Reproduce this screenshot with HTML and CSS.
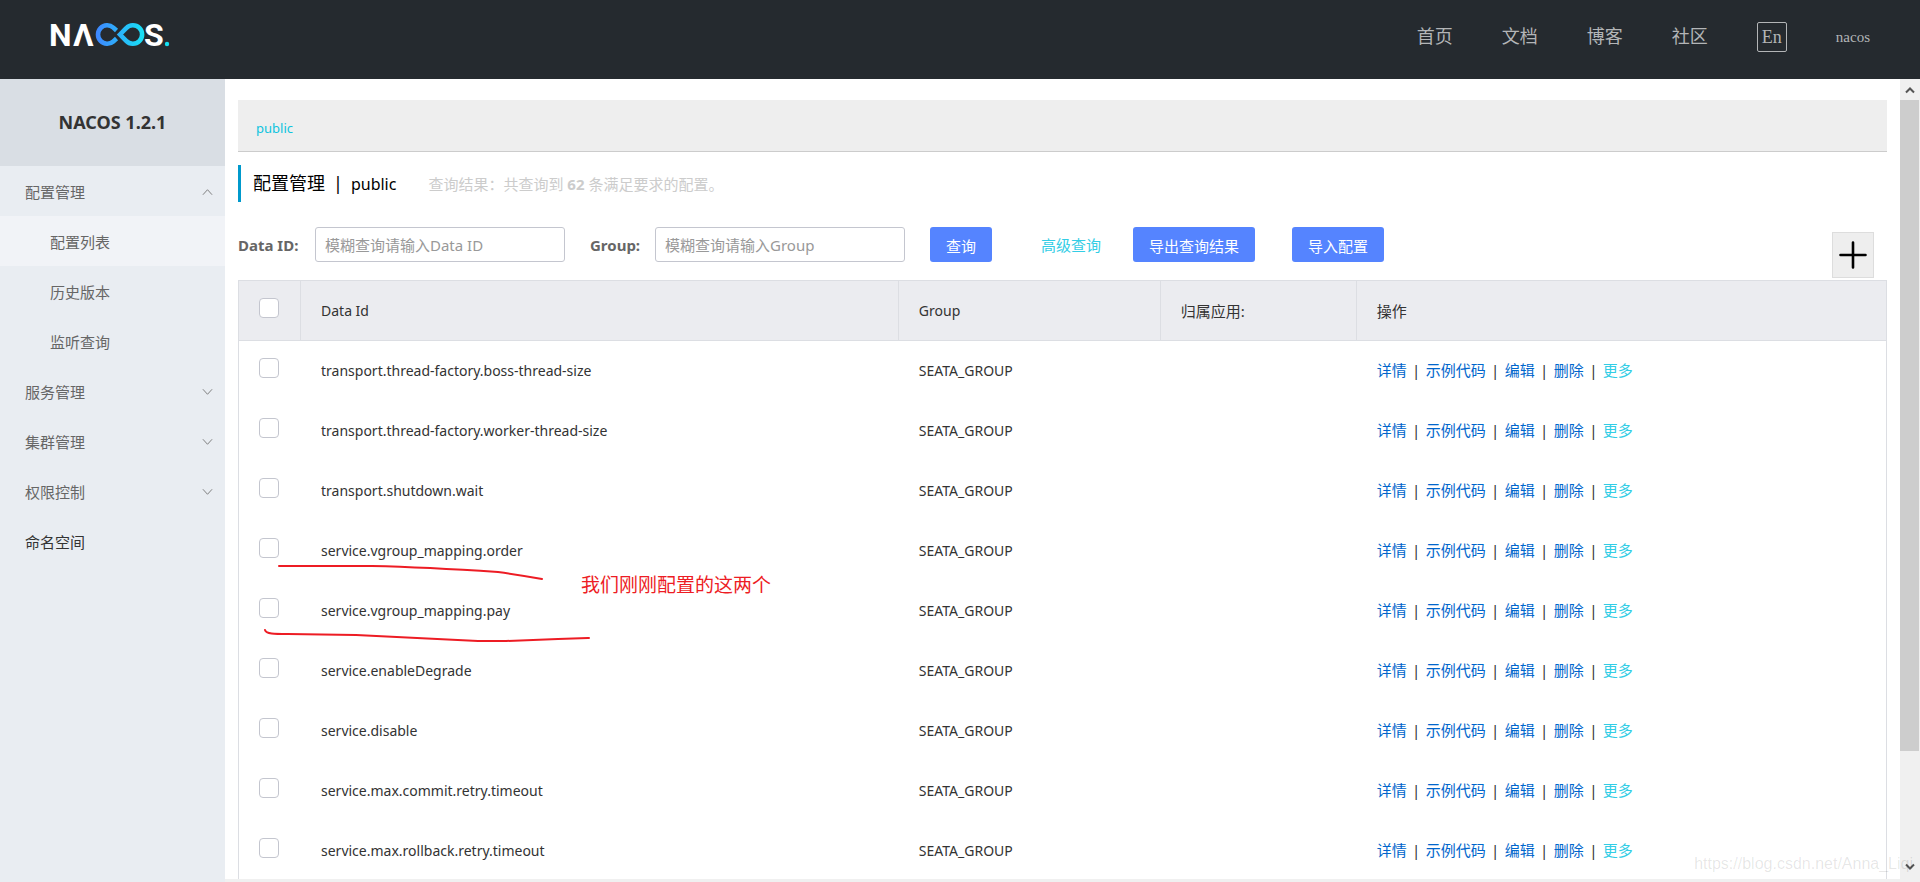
FILE: index.html
```html
<!DOCTYPE html>
<html lang="zh-CN">
<head>
<meta charset="utf-8">
<title>Nacos</title>
<link rel="stylesheet" href="styles.css">
</head>
<body>
<header class="topbar">
  <a class="logo" href="#" aria-label="Nacos">
    <svg width="120" height="28" viewBox="0 0 120 28">
      <defs>
        <linearGradient id="loop" gradientUnits="userSpaceOnUse" x1="45" y1="0" x2="94" y2="0">
          <stop offset="0" stop-color="#3f86ff"/>
          <stop offset="1" stop-color="#16e3f5"/>
        </linearGradient>
      </defs>
      <text class="logo-letter" x="-2" y="25">N</text>
      <text class="logo-letter" x="22" y="25">Λ</text>
      <g fill="none" stroke="url(#loop)" stroke-width="4.6">
        <path d="M65.5 9.5L62.3 6.6A9.2 9.2 0 1 0 62.3 20.4L65.5 17.5"/>
        <path d="M69 13.5L75.2 7.2A9.2 9.2 0 1 1 75.2 19.8Z"/>
      </g>
      <text class="logo-letter" x="93" y="25">S</text>
      <circle cx="116" cy="23" r="2.2" fill="#16dff0"/>
    </svg>
  </a>
  <nav class="topnav">
    <a href="#">首页</a>
    <a href="#">文档</a>
    <a href="#">博客</a>
    <a href="#">社区</a>
    <button class="lang" type="button">En</button>
    <a class="user" href="#">nacos</a>
  </nav>
</header>
<div class="layout">
  <aside class="sidebar">
    <h1 class="product">NACOS 1.2.1</h1>
    <nav class="menu">
      <a class="item" href="#">配置管理<svg class="chev" viewBox="0 0 12 8"><path d="M1 7L6 1.5L11 7"/></svg></a>
      <a class="item sub active" href="#">配置列表</a>
      <a class="item sub" href="#">历史版本</a>
      <a class="item sub" href="#">监听查询</a>
      <a class="item" href="#">服务管理<svg class="chev" viewBox="0 0 12 8"><path d="M1 1L6 6.5L11 1"/></svg></a>
      <a class="item" href="#">集群管理<svg class="chev" viewBox="0 0 12 8"><path d="M1 1L6 6.5L11 1"/></svg></a>
      <a class="item" href="#">权限控制<svg class="chev" viewBox="0 0 12 8"><path d="M1 1L6 6.5L11 1"/></svg></a>
      <a class="item strong" href="#">命名空间</a>
    </nav>
  </aside>
  <main class="main">
    <div class="content">
      <div class="namespaces"><a href="#">public</a></div>
      <div class="heading">
        <h2>配置管理<span class="bar">|</span><span class="space">public</span></h2>
        <p>查询结果：共查询到 <strong>62</strong> 条满足要求的配置。</p>
      </div>
      <form class="filters">
        <label for="data-id" class="label-id">Data ID:</label>
        <input id="data-id" type="text" placeholder="模糊查询请输入Data ID">
        <label for="group" class="label-group">Group:</label>
        <input id="group" type="text" placeholder="模糊查询请输入Group">
        <button class="btn search" type="button">查询</button>
        <a class="advanced" href="#">高级查询</a>
        <button class="btn export" type="button">导出查询结果</button>
        <button class="btn import" type="button">导入配置</button>
        <button class="add" type="button" aria-label="新建配置">
          <svg width="28" height="28" viewBox="0 0 28 28"><path d="M1.500 14H26.500M14 1.500V26.500" stroke="#000" stroke-width="2.600" stroke-linecap="round"/></svg>
        </button>
      </form>
      <div class="table-area">
        <table>
          <colgroup><col class="c-check"><col class="c-id"><col class="c-group"><col class="c-app"><col></colgroup>
          <thead>
            <tr><th><input type="checkbox" aria-label="全选"></th><th>Data Id</th><th>Group</th><th>归属应用:</th><th>操作</th></tr>
          </thead>
          <tbody>
            <tr><td><input type="checkbox" aria-label="选择"></td><td>transport.thread-factory.boss-thread-size</td><td>SEATA_GROUP</td><td></td><td><div class="ops"><a href="#">详情</a><i>|</i><a href="#">示例代码</a><i>|</i><a href="#">编辑</a><i>|</i><a href="#">删除</a><i>|</i><a class="more" href="#">更多</a></div></td></tr>
            <tr><td><input type="checkbox" aria-label="选择"></td><td>transport.thread-factory.worker-thread-size</td><td>SEATA_GROUP</td><td></td><td><div class="ops"><a href="#">详情</a><i>|</i><a href="#">示例代码</a><i>|</i><a href="#">编辑</a><i>|</i><a href="#">删除</a><i>|</i><a class="more" href="#">更多</a></div></td></tr>
            <tr><td><input type="checkbox" aria-label="选择"></td><td>transport.shutdown.wait</td><td>SEATA_GROUP</td><td></td><td><div class="ops"><a href="#">详情</a><i>|</i><a href="#">示例代码</a><i>|</i><a href="#">编辑</a><i>|</i><a href="#">删除</a><i>|</i><a class="more" href="#">更多</a></div></td></tr>
            <tr><td><input type="checkbox" aria-label="选择"></td><td>service.vgroup_mapping.order</td><td>SEATA_GROUP</td><td></td><td><div class="ops"><a href="#">详情</a><i>|</i><a href="#">示例代码</a><i>|</i><a href="#">编辑</a><i>|</i><a href="#">删除</a><i>|</i><a class="more" href="#">更多</a></div></td></tr>
            <tr><td><input type="checkbox" aria-label="选择"></td><td>service.vgroup_mapping.pay</td><td>SEATA_GROUP</td><td></td><td><div class="ops"><a href="#">详情</a><i>|</i><a href="#">示例代码</a><i>|</i><a href="#">编辑</a><i>|</i><a href="#">删除</a><i>|</i><a class="more" href="#">更多</a></div></td></tr>
            <tr><td><input type="checkbox" aria-label="选择"></td><td>service.enableDegrade</td><td>SEATA_GROUP</td><td></td><td><div class="ops"><a href="#">详情</a><i>|</i><a href="#">示例代码</a><i>|</i><a href="#">编辑</a><i>|</i><a href="#">删除</a><i>|</i><a class="more" href="#">更多</a></div></td></tr>
            <tr><td><input type="checkbox" aria-label="选择"></td><td>service.disable</td><td>SEATA_GROUP</td><td></td><td><div class="ops"><a href="#">详情</a><i>|</i><a href="#">示例代码</a><i>|</i><a href="#">编辑</a><i>|</i><a href="#">删除</a><i>|</i><a class="more" href="#">更多</a></div></td></tr>
            <tr><td><input type="checkbox" aria-label="选择"></td><td>service.max.commit.retry.timeout</td><td>SEATA_GROUP</td><td></td><td><div class="ops"><a href="#">详情</a><i>|</i><a href="#">示例代码</a><i>|</i><a href="#">编辑</a><i>|</i><a href="#">删除</a><i>|</i><a class="more" href="#">更多</a></div></td></tr>
            <tr><td><input type="checkbox" aria-label="选择"></td><td>service.max.rollback.retry.timeout</td><td>SEATA_GROUP</td><td></td><td><div class="ops"><a href="#">详情</a><i>|</i><a href="#">示例代码</a><i>|</i><a href="#">编辑</a><i>|</i><a href="#">删除</a><i>|</i><a class="more" href="#">更多</a></div></td></tr>
          </tbody>
        </table>
        <svg class="strokes" width="360" height="90" viewBox="0 0 360 90">
          <path d="M21 6H114C160 7 210 10 240 12Q262 15 284 19"/>
          <path d="M7 70C8 74 16 74 30 74L98 75L220 81H248L300 79L330 78H331"/>
        </svg>
        <span class="note">我们刚刚配置的这两个</span>
      </div>
    </div>
  </main>
  <div class="scrollbar">
    <svg class="arrow" viewBox="0 0 10 8"><path d="M1 6.500L5 2.500L9 6.500"/></svg>
    <div class="thumb"></div>
    <svg class="arrow" viewBox="0 0 10 8"><path d="M1 1.500L5 5.500L9 1.500"/></svg>
  </div>
</div>
<div class="watermark">https://blog.csdn.net/Anna_Liqi</div>
</body>
</html>
```

FILE: styles.css
```css
* { box-sizing: border-box; }

body {
  margin: 0;
  height: 100vh;
  overflow: hidden;
  display: flex;
  flex-direction: column;
  background: #fff;
  color: #333;
  font: 14px/20px "Noto Sans", "Noto Sans CJK SC", sans-serif;
}

a { color: inherit; text-decoration: none; }
button, input { font: inherit; }
h1, h2, p { margin: 0; }

.topbar {
  flex: none;
  height: 79px;
  padding: 0 50px 0 51px;
  display: flex;
  justify-content: space-between;
  align-items: flex-start;
  background: #252a2f;
}
.logo { margin-top: 21px; }
.logo svg { display: block; overflow: visible; }
.logo-letter { font: 700 32px Roboto, sans-serif; fill: #fff; }

.topnav {
  margin-top: 22px;
  display: flex;
  align-items: center;
  gap: 49px;
  color: #b3b5b7;
  font: 18px/30px "Liberation Serif", "Noto Sans CJK SC", serif;
}
.lang {
  width: 30px;
  height: 30px;
  padding: 0;
  border: 1px solid #b3b5b7;
  border-radius: 2px;
  background: none;
  color: inherit;
  line-height: 26px;
}
.user { font-size: 15px; }

.layout { flex: 1; min-height: 0; display: flex; }

.sidebar { flex: none; width: 225px; background: #e9edf2; }
.product {
  height: 87px;
  background: #d9dee4;
  text-align: center;
  font-size: 18px;
  line-height: 87px;
}
.menu { font-size: 15px; }
.item {
  height: 50px;
  padding: 2px 12px 0 25px;
  display: flex;
  align-items: center;
  justify-content: space-between;
  color: #666;
}
.sub { padding-left: 50px; }
.active { background: #f1f3f7; }
.strong { color: #333; }
.chev { width: 11px; height: 8px; fill: none; stroke: #777; }

.main {
  flex: 1;
  min-width: 0;
  overflow: hidden;
  border-bottom: 3px solid #f0f0f0;
}
.content { padding: 21px 13px 0; }

.namespaces {
  height: 52px;
  padding: 0 18px;
  border-bottom: 1px solid #ccc;
  background: #eee;
  color: #0fc4de;
  font-size: 13px;
  line-height: 57px;
}

.heading {
  height: 37px;
  margin-top: 13px;
  padding-left: 12px;
  border-left: 3px solid #09c;
  display: flex;
  align-items: center;
  gap: 32px;
}
.heading h2 { color: #000; font-size: 18px; font-weight: 400; }
.bar { margin: 0 8px; }
.space { font-size: 16px; }
.heading p { color: #ccc; font-size: 15px; }

.filters {
  margin: 25px 0 2px;
  display: flex;
  align-items: flex-start;
  line-height: 36px;
}
.filters label { color: #666; font-size: 15px; font-weight: 700; }
.label-id { width: 77px; }
.label-group { width: 65px; margin-left: 25px; }
.filters input {
  width: 250px;
  height: 35px;
  padding: 1px 9px 0;
  border: 1px solid #c4c6cf;
  border-radius: 3px;
  color: #333;
  font-size: 15px;
}
.filters input::placeholder { color: #999; }
.btn {
  height: 35px;
  padding: 1px 16px 0;
  border: 0;
  border-radius: 3px;
  background: #5584ff;
  color: #fff;
  font-size: 15px;
}
.search { margin-left: 25px; }
.advanced { margin-left: 49px; color: #33cde5; font-size: 15px; }
.export { margin-left: 32px; }
.import { margin-left: 37px; }
.add {
  width: 42px;
  height: 46px;
  margin: 5px 13px 0 auto;
  padding: 0;
  border: 1px solid #ddd;
  background: #eee;
  display: flex;
  align-items: center;
  justify-content: center;
}

.table-area { position: relative; }
table {
  width: 100%;
  table-layout: fixed;
  border-collapse: separate;
  border-spacing: 0;
  border: 1px solid #dcdee3;
}
.c-check { width: 62px; }
.c-id { width: 36.3%; }
.c-group { width: 15.9%; }
.c-app { width: 11.9%; }
th {
  height: 60px;
  padding: 0 20px;
  border-right: 1px solid #dcdee3;
  border-bottom: 1px solid #dcdee3;
  background: #ebecf0;
  text-align: left;
  font-weight: 400;
}
th:last-child { border-right: 0; }
td { height: 60px; padding: 0 20px; }
th:nth-child(n+4), .ops { font-size: 15px; line-height: 18px; }
table input {
  appearance: none;
  display: block;
  width: 20px;
  height: 20px;
  margin: 0 0 6px;
  border: 1px solid #c4c6cf;
  border-radius: 4px;
  background: #fff;
}
.ops { display: flex; gap: 5px; padding-bottom: 2px; color: #06c; }
.ops i { width: 9px; text-align: center; font-style: normal; color: #333; }
.ops .more { color: #33cde5; }

.strokes {
  position: absolute;
  left: 20px;
  top: 280px;
  fill: none;
  stroke: #ed1c24;
  stroke-width: 2;
  stroke-linecap: round;
}
.note {
  position: absolute;
  left: 343px;
  top: 292px;
  color: #ed1c24;
  font-size: 19px;
  line-height: 26px;
}

.scrollbar {
  flex: none;
  width: 20px;
  padding-right: 1px;
  display: flex;
  flex-direction: column;
  align-items: center;
  background: #f0f0f0;
}
.thumb { width: 100%; height: 651px; background: #cdcdcd; }
.arrow {
  flex: none;
  width: 10px;
  height: 8px;
  margin: 7px 0 6px;
  fill: none;
  stroke: #555;
  stroke-width: 2;
}
.arrow:last-child { margin: auto 0 11px; }

.watermark {
  position: absolute;
  right: 7px;
  bottom: 8px;
  color: rgba(0, 0, 0, 0.1);
  font: 16px/20px "Liberation Sans", sans-serif;
}
```
